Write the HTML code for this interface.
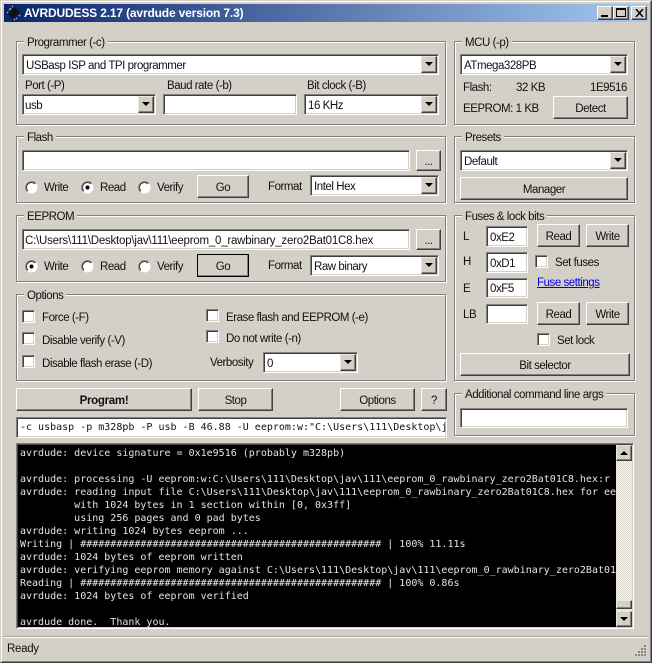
<!DOCTYPE html>
<html>
<head>
<meta charset="utf-8">
<title>AVRDUDESS 2.17</title>
<style>
html,body{margin:0;padding:0;width:652px;height:663px;overflow:hidden;background:#d4d0c8}
#w{position:absolute;left:0;top:0;width:652px;height:663px;background:#d4d0c8;font-family:"Liberation Sans",sans-serif;font-size:11.5px;color:#111;overflow:hidden}
#w div,#w a,#w svg{position:absolute;box-sizing:border-box}
.t{white-space:nowrap;line-height:14px;letter-spacing:-.45px}
.g{border:1px solid #808080;box-shadow:inset 1px 1px 0 #fff,1px 1px 0 #fff}
.l{background:#d4d0c8;padding:0 3px;white-space:nowrap;line-height:14px;letter-spacing:-.45px;top:-6px;left:7px;height:13px}
.f{background:#fff;border:1px solid;border-color:#808080 #fff #fff #808080;box-shadow:inset 1px 1px 0 #404040,inset -1px -1px 0 #d4d0c8;white-space:nowrap;letter-spacing:-.45px;padding-left:3px;line-height:22px;overflow:hidden}
.b{background:#d4d0c8;border:1px solid;border-color:#fff #404040 #404040 #fff;box-shadow:inset -1px -1px 0 #808080;text-align:center;white-space:nowrap;letter-spacing:-.45px;line-height:24px}
.a{background:#d4d0c8;border:1px solid;border-color:#e8e6e0 #404040 #404040 #e8e6e0;box-shadow:inset -1px -1px 0 #808080;width:16px;right:1px;top:1px;bottom:1px}
.a:after{content:"";position:absolute;left:3px;top:5px;border:4px solid transparent;border-top:4px solid #000;border-bottom:0}
.s{background:#d4d0c8;border:1px solid;border-color:#e8e6e0 #404040 #404040 #e8e6e0;box-shadow:inset -1px -1px 0 #808080;width:16px;left:616px}
.c{width:13px;height:13px;background:#fff;border:1px solid;border-color:#808080 #fff #fff #808080;box-shadow:inset 1px 1px 0 #404040,inset -1px -1px 0 #d4d0c8}
.r{width:13px;height:13px}
</style>
</head>
<body>
<div id="w">
<!-- window frame -->
<div style="left:0;top:0;width:652px;height:663px;border:1px solid;border-color:#d4d0c8 #404040 #404040 #d4d0c8"></div>
<div style="left:1px;top:1px;width:650px;height:661px;border:1px solid;border-color:#fff #808080 #808080 #fff"></div>
<!-- title bar -->
<div style="left:4px;top:4px;width:644px;height:18px;background:linear-gradient(90deg,#0a246a,#a6caf0)"></div>
<svg style="left:6px;top:5px" width="16" height="16" viewBox="0 0 16 16"><path d="M2 9L9 2 14 7 7 14Z" fill="#111"/><path d="M3 5L5 3M1 8L2 7M6 2L7 1M10 14L11 13M13 11L14 10M8 15L9 14" stroke="#ccd" stroke-width="1"/></svg>
<div class="t" style="left:24px;top:6px;color:#fff;font-weight:bold;font-size:12px;letter-spacing:-.16px">AVRDUDESS 2.17 (avrdude version 7.3)</div>
<div class="b" style="left:597px;top:6px;width:16px;height:14px"><div style="left:3px;top:8px;width:7px;height:2px;background:#000"></div></div>
<div class="b" style="left:613px;top:6px;width:16px;height:14px"><div style="left:2px;top:1px;width:10px;height:9px;border:1px solid #000;border-top-width:2px"></div></div>
<div class="b" style="left:631px;top:6px;width:16px;height:14px"><svg style="left:3px;top:2px" width="9" height="8" viewBox="0 0 9 8"><path d="M1 0L8 8M8 0L1 8" stroke="#000" stroke-width="1.5"/></svg></div>

<!-- Programmer -->
<div class="g" style="left:16px;top:41px;width:430px;height:84px"><div class="l">Programmer (-c)</div></div>
<div class="f" style="left:22px;top:54px;width:417px;height:21px">USBasp ISP and TPI programmer<div class="a"></div></div>
<div class="t" style="left:25px;top:79px">Port (-P)</div>
<div class="f" style="left:22px;top:94px;width:134px;height:21px;padding-left:2px">usb<div class="a"></div></div>
<div class="t" style="left:167px;top:79px">Baud rate (-b)</div>
<div class="f" style="left:163px;top:94px;width:134px;height:21px"></div>
<div class="t" style="left:307px;top:79px">Bit clock (-B)</div>
<div class="f" style="left:304px;top:94px;width:135px;height:21px">16 KHz<div class="a"></div></div>

<!-- MCU -->
<div class="g" style="left:454px;top:41px;width:181px;height:84px"><div class="l">MCU (-p)</div></div>
<div class="f" style="left:460px;top:54px;width:168px;height:21px">ATmega328PB<div class="a"></div></div>
<div class="t" style="left:463px;top:81px">Flash:</div>
<div class="t" style="left:516px;top:81px">32 KB</div>
<div class="t" style="left:590px;top:81px">1E9516</div>
<div class="t" style="left:463px;top:102px">EEPROM: 1 KB</div>
<div class="b" style="left:553px;top:96px;width:75px;height:23px">Detect</div>

<!-- Flash -->
<div class="g" style="left:16px;top:136px;width:430px;height:67px"><div class="l">Flash</div></div>
<div class="f" style="left:22px;top:150px;width:388px;height:21px"></div>
<div class="b" style="left:416px;top:150px;width:25px;height:21px;line-height:22px">...</div>
<svg class="r" style="left:25px;top:181px" viewBox="0 0 13 13"><use href="#rb"/></svg>
<div class="t" style="left:44px;top:181px">Write</div>
<svg class="r" style="left:81px;top:181px" viewBox="0 0 13 13"><use href="#rb"/><circle cx="6.5" cy="6.5" r="2" fill="#000"/></svg>
<div class="t" style="left:100px;top:181px">Read</div>
<svg class="r" style="left:138px;top:181px" viewBox="0 0 13 13"><use href="#rb"/></svg>
<div class="t" style="left:157px;top:181px">Verify</div>
<div class="b" style="left:197px;top:175px;width:52px;height:23px">Go</div>
<div class="t" style="left:268px;top:180px">Format</div>
<div class="f" style="left:310px;top:175px;width:129px;height:21px">Intel Hex<div class="a"></div></div>

<!-- EEPROM -->
<div class="g" style="left:16px;top:215px;width:430px;height:67px"><div class="l">EEPROM</div></div>
<div class="f" style="left:22px;top:229px;width:388px;height:21px;padding-left:2px;letter-spacing:-.22px">C:\Users\111\Desktop\jav\111\eeprom_0_rawbinary_zero2Bat01C8.hex</div>
<div class="b" style="left:416px;top:229px;width:25px;height:21px;line-height:22px">...</div>
<svg class="r" style="left:25px;top:260px" viewBox="0 0 13 13"><use href="#rb"/><circle cx="6.5" cy="6.5" r="2" fill="#000"/></svg>
<div class="t" style="left:44px;top:260px">Write</div>
<svg class="r" style="left:81px;top:260px" viewBox="0 0 13 13"><use href="#rb"/></svg>
<div class="t" style="left:100px;top:260px">Read</div>
<svg class="r" style="left:138px;top:260px" viewBox="0 0 13 13"><use href="#rb"/></svg>
<div class="t" style="left:157px;top:260px">Verify</div>
<div class="b" style="left:197px;top:254px;width:52px;height:23px;outline:1px solid #000;outline-offset:-1px">Go</div>
<div class="t" style="left:268px;top:259px">Format</div>
<div class="f" style="left:310px;top:255px;width:129px;height:21px">Raw binary<div class="a"></div></div>

<!-- Presets -->
<div class="g" style="left:454px;top:136px;width:181px;height:67px"><div class="l">Presets</div></div>
<div class="f" style="left:460px;top:150px;width:168px;height:21px">Default<div class="a"></div></div>
<div class="b" style="left:460px;top:177px;width:168px;height:23px">Manager</div>

<!-- Fuses -->
<div class="g" style="left:454px;top:215px;width:181px;height:166px"><div class="l">Fuses &amp; lock bits</div></div>
<div class="t" style="left:463px;top:230px">L</div>
<div class="f" style="left:486px;top:226px;width:42px;height:21px">0xE2</div>
<div class="b" style="left:537px;top:224px;width:43px;height:23px">Read</div>
<div class="b" style="left:586px;top:224px;width:43px;height:23px">Write</div>
<div class="t" style="left:463px;top:255px">H</div>
<div class="f" style="left:486px;top:252px;width:42px;height:21px">0xD1</div>
<div class="c" style="left:535px;top:255px"></div>
<div class="t" style="left:555px;top:256px">Set fuses</div>
<div class="t" style="left:463px;top:282px">E</div>
<div class="f" style="left:486px;top:278px;width:42px;height:20px;line-height:20px">0xF5</div>
<a class="t" style="left:537px;top:276px;color:#0000ee;text-decoration:underline">Fuse settings</a>
<div class="t" style="left:463px;top:308px">LB</div>
<div class="f" style="left:486px;top:304px;width:42px;height:20px"></div>
<div class="b" style="left:537px;top:302px;width:43px;height:23px">Read</div>
<div class="b" style="left:586px;top:302px;width:43px;height:23px">Write</div>
<div class="c" style="left:537px;top:333px"></div>
<div class="t" style="left:557px;top:334px">Set lock</div>
<div class="b" style="left:460px;top:353px;width:170px;height:23px">Bit selector</div>

<!-- Options -->
<div class="g" style="left:16px;top:294px;width:430px;height:87px"><div class="l" style="left:7px">Options</div></div>
<div class="c" style="left:22px;top:310px"></div>
<div class="t" style="left:42px;top:311px">Force (-F)</div>
<div class="c" style="left:22px;top:332px"></div>
<div class="t" style="left:42px;top:334px">Disable verify (-V)</div>
<div class="c" style="left:22px;top:355px"></div>
<div class="t" style="left:42px;top:357px">Disable flash erase (-D)</div>
<div class="c" style="left:206px;top:309px"></div>
<div class="t" style="left:226px;top:311px">Erase flash and EEPROM (-e)</div>
<div class="c" style="left:206px;top:330px"></div>
<div class="t" style="left:226px;top:332px">Do not write (-n)</div>
<div class="t" style="left:210px;top:356px">Verbosity</div>
<div class="f" style="left:263px;top:352px;width:95px;height:21px">0<div class="a"></div></div>

<!-- Actions -->
<div class="b" style="left:16px;top:388px;width:176px;height:23px;font-weight:bold;letter-spacing:-.3px">Program!</div>
<div class="b" style="left:198px;top:388px;width:75px;height:23px">Stop</div>
<div class="b" style="left:340px;top:388px;width:75px;height:23px">Options</div>
<div class="b" style="left:421px;top:388px;width:26px;height:23px">?</div>
<div class="f" style="left:16px;top:417px;width:431px;height:21px;font-family:'DejaVu Sans Mono',monospace;font-size:10px;letter-spacing:0;padding-left:3px;line-height:19px">-c usbasp -p m328pb -P usb -B 46.88 -U eeprom:w:"C:\Users\111\Desktop\jav\111\eeprom_0_rawbinary_zero2Bat01C8.hex"</div>

<!-- Additional -->
<div class="g" style="left:454px;top:393px;width:181px;height:43px"><div class="l">Additional command line args</div></div>
<div class="f" style="left:460px;top:408px;width:168px;height:20px"></div>

<!-- Log -->
<div class="f" style="left:16px;top:443px;width:618px;height:186px;background:#000;padding:0"></div>
<div style="left:18px;top:445px;width:598px;height:182px;background:#000;overflow:hidden;color:#e4e4e4;font-family:'DejaVu Sans Mono',monospace;font-size:10px;line-height:13px;white-space:pre;padding:2px 0 0 2px">avrdude: device signature = 0x1e9516 (probably m328pb)

avrdude: processing -U eeprom:w:C:\Users\111\Desktop\jav\111\eeprom_0_rawbinary_zero2Bat01C8.hex:r
avrdude: reading input file C:\Users\111\Desktop\jav\111\eeprom_0_rawbinary_zero2Bat01C8.hex for eeprom
         with 1024 bytes in 1 section within [0, 0x3ff]
         using 256 pages and 0 pad bytes
avrdude: writing 1024 bytes eeprom ...
Writing | ################################################## | 100% 11.11s
avrdude: 1024 bytes of eeprom written
avrdude: verifying eeprom memory against C:\Users\111\Desktop\jav\111\eeprom_0_rawbinary_zero2Bat01C8.hex
Reading | ################################################## | 100% 0.86s
avrdude: 1024 bytes of eeprom verified

avrdude done.  Thank you.</div>
<!-- scrollbar -->
<div style="left:616px;top:445px;width:16px;height:182px;background:repeating-conic-gradient(#d4d0c8 0 25%,#fff 0 50%) 0 0/2px 2px"></div>
<div class="s" style="top:445px;height:16px"></div>
<div style="left:620px;top:451px;width:0;height:0;border:4px solid transparent;border-bottom:4px solid #000;border-top:0"></div>
<div class="s" style="top:600px;height:9px"></div>
<div class="s" style="top:611px;height:16px"></div>
<div style="left:620px;top:617px;width:0;height:0;border:4px solid transparent;border-top:4px solid #000;border-bottom:0"></div>

<!-- Status -->
<div style="left:4px;top:636px;width:644px;height:1px;background:#a8a49c"></div>
<div style="left:4px;top:637px;width:644px;height:1px;background:#fff"></div>
<div class="t" style="left:7px;top:642px;letter-spacing:-.3px">Ready</div>
<svg style="left:634px;top:644px" width="14" height="14" viewBox="0 0 14 14"><path d="M10 1h2v2h-2zM7 4h2v2H7zM10 4h2v2h-2zM4 7h2v2H4zM7 7h2v2H7zM10 7h2v2h-2zM1 10h2v2H1zM4 10h2v2H4zM7 10h2v2H7zM10 10h2v2h-2z" fill="#8a8780"/></svg>

<svg width="0" height="0" style="left:0;top:0"><defs><g id="rb"><circle cx="6.5" cy="6.5" r="6" fill="#fff"/><path d="M2.26 10.74A6 6 0 0 1 10.74 2.26" fill="none" stroke="#808080" stroke-width="1"/><path d="M2.96 10.04A5 5 0 0 1 10.04 2.96" fill="none" stroke="#404040" stroke-width="1"/></g></defs></svg>
</div>
</body>
</html>
